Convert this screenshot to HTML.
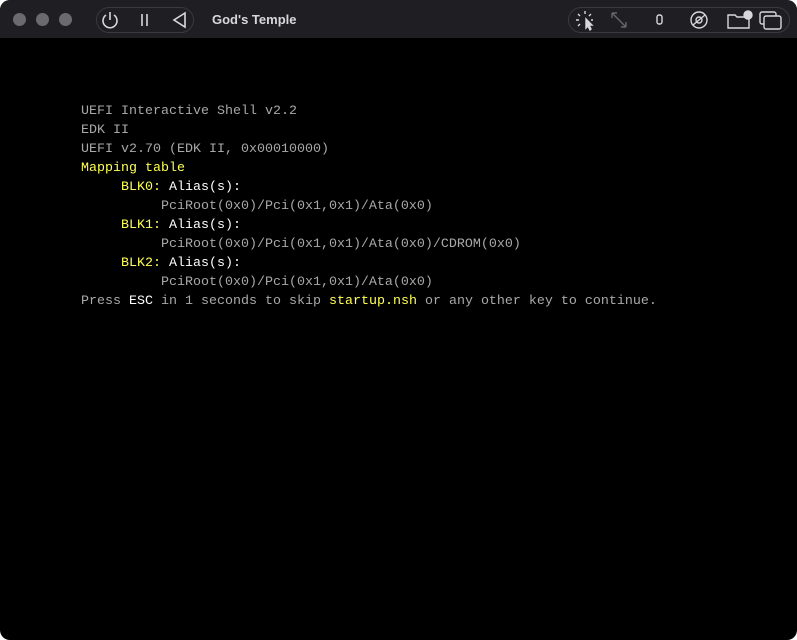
<!DOCTYPE html>
<html><head><meta charset="utf-8"><style>
html,body{margin:0;padding:0;background:#fff;}
body{width:797px;height:640px;overflow:hidden;position:relative;}
.win{position:absolute;left:0;top:0;width:797px;height:640px;background:#000;border-radius:10px;overflow:hidden;}
.bar{position:absolute;left:0;top:0;width:797px;height:38px;background:#1f1e23;border-bottom:1px solid #000;}
.dot{position:absolute;top:13px;width:13px;height:13px;border-radius:50%;background:#6b6a6e;}
.grp{position:absolute;top:7px;height:24px;border:1px solid #3a393e;border-radius:13px;}
.title{position:absolute;left:212px;top:12px;color:#d8d8da;font:bold 13px "Liberation Sans",sans-serif;}
.term{position:absolute;left:81px;top:102px;font:13.33px/19px "Liberation Mono",monospace;color:#a8a8a8;white-space:pre;}
.y{color:#ffff55}.w{color:#fff}
svg{position:absolute;}
</style></head><body><div class="win">
<div class="bar">
<div class="dot" style="left:13px"></div><div class="dot" style="left:36px"></div><div class="dot" style="left:59px"></div>
<div class="grp" style="left:96px;width:96px"></div>
<svg style="left:100px;top:9px" width="90" height="22" fill="none" stroke="#d8d8da" stroke-width="1.6">
<path d="M6 6 A7 7 0 1 0 14 6"/><path d="M10 3V11"/>
<path d="M42 5V17M47 5V17"/>
<path d="M85 4L74 11L85 18Z"/>
</svg>
<div class="title">God's Temple</div>
<div class="grp" style="left:568px;width:220px"></div>
<svg style="left:572px;top:8px" width="220" height="24" fill="none" stroke="#d8d8da" stroke-width="1.4">
<path d="M13 3V6M6 6l2 2M4 12h3M6 18l2-2M19 6l-2 2M21 12h-2"/><path d="M14 11l0 9 2-2 2 4 1-1-2-4h3z" fill="#d8d8da"/>
<path d="M40 5l14 14M40 5h5M40 5v5M54 19h-5M54 19v-5" stroke="#666"/>
<rect x="85" y="7" width="5" height="9" rx="2"/>
<circle cx="127" cy="12" r="8"/><circle cx="127" cy="12" r="3"/><path d="M121 17l12-10"/>
<path d="M156 7h7l2 2h12v11h-21z"/><circle cx="176" cy="7" r="4" fill="#d8d8da"/>
<rect x="188" y="4" width="16" height="12" rx="2"/><rect x="192" y="8" width="17" height="13" rx="2" fill="#1f1e23"/>
</svg>
</div>
<div class="term">UEFI Interactive Shell v2.2
EDK II
UEFI v2.70 (EDK II, 0x00010000)
<span class="y">Mapping table</span>
     <span class="y">BLK0:</span> <span class="w">Alias(s):</span>
          PciRoot(0x0)/Pci(0x1,0x1)/Ata(0x0)
     <span class="y">BLK1:</span> <span class="w">Alias(s):</span>
          PciRoot(0x0)/Pci(0x1,0x1)/Ata(0x0)/CDROM(0x0)
     <span class="y">BLK2:</span> <span class="w">Alias(s):</span>
          PciRoot(0x0)/Pci(0x1,0x1)/Ata(0x0)
Press <span class="w">ESC</span> in 1 seconds to skip <span class="y">startup.nsh</span> or any other key to continue.</div>
</div></body></html>
